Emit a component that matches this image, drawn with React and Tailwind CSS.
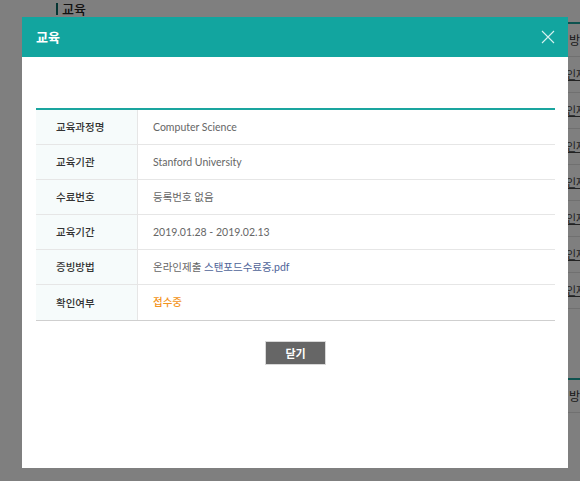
import React from "react";

const rows = [
  { label: "교육과정명", value: "Computer Science" },
  { label: "교육기관", value: "Stanford University" },
  { label: "수료번호", value: "등록번호 없음" },
  { label: "교육기간", value: "2019.01.28 - 2019.02.13" },
  { label: "증빙방법", value: "file" },
  { label: "확인여부", value: "status" },
];

const bgRows = [0, 1, 2, 3, 4, 5, 6];

export default function App() {
  const font = { fontFamily: '"Noto Sans CJK KR", "Noto Sans", sans-serif' };
  const valFont = { fontFamily: 'Lato, "Noto Sans CJK KR", sans-serif' };
  return (
    <div className="relative w-[580px] h-[481px] overflow-hidden bg-white" style={font}>
      {/* background page */}
      <div className="flex flex-col w-[720px] pl-[56px]">
        <div className="flex items-center gap-[4px] h-[17px] pt-[1px]">
          <div className="w-[2px] h-[12px] bg-[#0a6b66]" />
          <span className="text-[13px] font-medium text-[#222]">교육</span>
        </div>
        <div className="flex flex-col ml-[-56px] pl-[40px] mt-[5px]">
          <div className="flex h-[35px] border-t-2 border-[#1aa59f] border-b border-b-[#e0e0e0] items-center">
            <div className="w-[529px] shrink-0" />
            <span className="text-[12px] text-[#333] whitespace-nowrap">방법</span>
          </div>
          {bgRows.map((i) => (
            <div key={i} className="flex h-[36px] border-b border-[#e0e0e0] items-center">
              <div className="w-[526px] shrink-0" />
              <span className="text-[11px] text-[#444] underline whitespace-nowrap">인재</span>
            </div>
          ))}
          <div className="h-[69px]" />
          <div className="flex h-[35px] border-t-2 border-[#1aa59f] border-b border-b-[#e0e0e0] items-center">
            <div className="w-[529px] shrink-0" />
            <span className="text-[12px] text-[#333] whitespace-nowrap">방법</span>
          </div>
        </div>
      </div>

      {/* overlay */}
      <div className="absolute inset-0 bg-black/50" />

      {/* modal */}
      <div className="absolute left-[22px] top-[17px] w-[546px] h-[451px] bg-white flex flex-col">
        <div className="h-[40px] bg-[#12a59f] flex items-center justify-between pl-[14px] pr-[12px]">
          <span className="text-white text-[13px] font-semibold">교육</span>
          <svg width="16" height="16" viewBox="0 0 16 16" className="text-[#d6f2f0]">
            <path d="M2 2 L14 14 M14 2 L2 14" stroke="currentColor" strokeWidth="1.1" fill="none" />
          </svg>
        </div>
        <div className="flex flex-col pl-[14px] pr-[13px] pt-[51px]">
          <div className="border-t-2 border-[#1aa59f] border-b border-b-[#cfcfcf]">
            {rows.map((r, i) => (
              <div
                key={r.label}
                className={`flex h-[35px] ${i < rows.length - 1 ? "border-b border-[#e6e6e6]" : ""}`}
              >
                <div className="w-[102px] shrink-0 bg-[#f6fbfb] border-r border-[#e6e6e6] flex items-center pl-[20px] text-[10.5px] font-medium text-[#333]">
                  {r.label}
                </div>
                <div className="flex items-center pl-[15px] pt-[1px] text-[10.5px] text-[#666]" style={valFont}>
                  {r.value === "file" ? (
                    <span>
                      온라인제출 <span className="text-[#4f6499]">스탠포드수료증.pdf</span>
                    </span>
                  ) : r.value === "status" ? (
                    <span className="text-[#f39422] font-medium">접수중</span>
                  ) : (
                    <span>{r.value}</span>
                  )}
                </div>
              </div>
            ))}
          </div>
          <div className="flex justify-center pt-[20px]">
            <button className="w-[61px] h-[24px] bg-[#666] border border-[#d8d8d8] text-white text-[11px] font-semibold flex items-center justify-center">
              닫기
            </button>
          </div>
        </div>
      </div>
    </div>
  );
}
